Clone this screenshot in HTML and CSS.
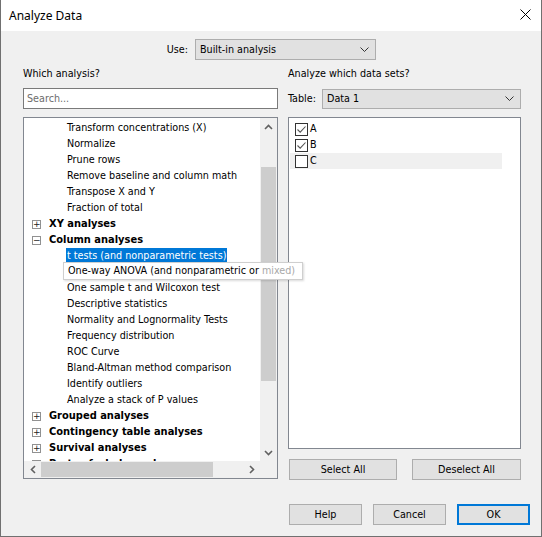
FILE: index.html
```html
<!DOCTYPE html>
<html lang="en">
<head>
    <meta charset="UTF-8">
    <meta name="viewport" content="width=device-width, initial-scale=1.0">
    <title>Analyze Data</title>
    <link rel="stylesheet" href="styles.css">
</head>
<body>
    <div class="window">
        <div class="titlebar">
            <span class="title">Analyze Data</span>
            <svg class="close" width="11" height="11" viewBox="0 0 11 11">
                <path d="M0.5 0.5 L10.5 10.5 M10.5 0.5 L0.5 10.5" stroke="#000" stroke-width="1" fill="none"/>
            </svg>
        </div>

        <div class="dialog-body">
            <div class="use-row">
                <label class="use-label">Use:</label>
                <div class="select use-select">
                    <span>Built-in analysis</span>
                    <svg class="chevron" width="9" height="5" viewBox="0 0 9 5"><path d="M0.5 0.5 L4.5 4.5 L8.5 0.5" stroke="#333" fill="none"/></svg>
                </div>
            </div>

            <div class="columns">
                <div class="col-left">
                    <div class="caption">Which analysis?</div>
                    <div class="search">Search...</div>

                    <div class="tree">
                        <div class="tree-items">
                            <div class="row child"><span>Transform concentrations (X)</span></div>
                            <div class="row child"><span>Normalize</span></div>
                            <div class="row child"><span>Prune rows</span></div>
                            <div class="row child"><span>Remove baseline and column math</span></div>
                            <div class="row child"><span>Transpose X and Y</span></div>
                            <div class="row child"><span>Fraction of total</span></div>
                            <div class="row parent"><i class="expander">+</i><span>XY analyses</span></div>
                            <div class="row parent"><i class="expander">&minus;</i><span>Column analyses</span></div>
                            <div class="row child"><span class="selected">t tests (and nonparametric tests)</span></div>
                            <div class="row child"><span>One-way ANOVA (and nonparametric or mixed)</span></div>
                            <div class="row child"><span>One sample t and Wilcoxon test</span></div>
                            <div class="row child"><span>Descriptive statistics</span></div>
                            <div class="row child"><span>Normality and Lognormality Tests</span></div>
                            <div class="row child"><span>Frequency distribution</span></div>
                            <div class="row child"><span>ROC Curve</span></div>
                            <div class="row child"><span>Bland-Altman method comparison</span></div>
                            <div class="row child"><span>Identify outliers</span></div>
                            <div class="row child"><span>Analyze a stack of P values</span></div>
                            <div class="row parent"><i class="expander">+</i><span>Grouped analyses</span></div>
                            <div class="row parent"><i class="expander">+</i><span>Contingency table analyses</span></div>
                            <div class="row parent"><i class="expander">+</i><span>Survival analyses</span></div>
                            <div class="row parent"><i class="expander">+</i><span>Parts of whole analyses</span></div>
                        </div>

                        <div class="vscroll">
                            <div class="arrow">
                                <svg width="9" height="6" viewBox="0 0 9 6"><path d="M1 5 L4.5 1.5 L8 5" stroke="#606060" stroke-width="1.6" fill="none"/></svg>
                            </div>
                            <div class="vtrack"><div class="vthumb"></div></div>
                            <div class="arrow">
                                <svg width="9" height="6" viewBox="0 0 9 6"><path d="M1 1 L4.5 4.5 L8 1" stroke="#606060" stroke-width="1.6" fill="none"/></svg>
                            </div>
                        </div>

                        <div class="hscroll">
                            <div class="arrow">
                                <svg width="6" height="9" viewBox="0 0 6 9"><path d="M5 1 L1.5 4.5 L5 8" stroke="#606060" stroke-width="1.6" fill="none"/></svg>
                            </div>
                            <div class="htrack"><div class="hthumb"></div></div>
                            <div class="arrow">
                                <svg width="6" height="9" viewBox="0 0 6 9"><path d="M1 1 L4.5 4.5 L1 8" stroke="#606060" stroke-width="1.6" fill="none"/></svg>
                            </div>
                        </div>

                        <div class="corner"></div>
                    </div>
                </div>

                <div class="col-right">
                    <div class="caption">Analyze which data sets?</div>
                    <div class="table-row">
                        <label class="table-label">Table:</label>
                        <div class="select table-select">
                            <span>Data 1</span>
                            <svg class="chevron" width="9" height="5" viewBox="0 0 9 5"><path d="M0.5 0.5 L4.5 4.5 L8.5 0.5" stroke="#333" fill="none"/></svg>
                        </div>
                    </div>

                    <div class="sets">
                        <div class="set-row">
                            <span class="checkbox checked">
                                <svg width="11" height="11" viewBox="0 0 11 11"><path d="M1.5 5.5 L4.2 8.2 L9.5 2.5" stroke="#555" stroke-width="1.1" fill="none"/></svg>
                            </span>
                            <span>A</span>
                        </div>
                        <div class="set-row">
                            <span class="checkbox checked">
                                <svg width="11" height="11" viewBox="0 0 11 11"><path d="M1.5 5.5 L4.2 8.2 L9.5 2.5" stroke="#555" stroke-width="1.1" fill="none"/></svg>
                            </span>
                            <span>B</span>
                        </div>
                        <div class="set-row hover">
                            <span class="checkbox"></span>
                            <span>C</span>
                        </div>
                    </div>

                    <div class="set-buttons">
                        <button class="button select-all">Select All</button>
                        <button class="button deselect-all">Deselect All</button>
                    </div>
                </div>
            </div>

            <div class="footer">
                <button class="button">Help</button>
                <button class="button">Cancel</button>
                <button class="button default">OK</button>
            </div>
        </div>

        <!-- in-place tip for the truncated tree item -->
        <div class="tooltip">One-way ANOVA (and nonparametric or <span class="fade">mixed)</span></div>
    </div>
</body>
</html>
```

FILE: styles.css
```css
body {
    margin: 0;
    background-color: #ffffff;
    font-family: "DejaVu Sans Condensed", "DejaVu Sans", sans-serif;
    font-size: 10.7px;
    color: #000;
}

.window {
    position: relative;
    width: 542px;
    height: 537px;
    box-sizing: border-box;
    border: 1px solid #707070;
    border-top: none;
    background-color: #f0f0f0;
}

.titlebar {
    height: 31px;
    background-color: #ffffff;
    display: flex;
    align-items: center;
    justify-content: space-between;
    padding: 0 10px 0 8px;
}

.title {
    font-family: "Noto Sans", sans-serif;
    font-size: 12px;
    margin-top: -1px;
}

.close {
    margin-top: -2px;
}

.dialog-body {
    padding: 8px 0 0 22px;
}

/* Use: row */

.use-row {
    display: flex;
    align-items: center;
    height: 21px;
    padding-left: 127px;
}

.use-label {
    width: 38px;
    text-align: right;
    margin-right: 7px;
}

.select {
    box-sizing: border-box;
    height: 21px;
    border: 1px solid #adadad;
    background-color: #e1e1e1;
    display: flex;
    align-items: center;
    justify-content: space-between;
    padding: 0 6px 0 4px;
}

.use-select {
    width: 181px;
}

.table-select {
    width: 199px;
    height: 20px;
}

/* two columns */

.columns {
    display: flex;
    gap: 10px;
    margin-top: 6px;
}

.col-left {
    width: 255px;
    display: flex;
    flex-direction: column;
}

.col-right {
    width: 233px;
    display: flex;
    flex-direction: column;
}

.caption {
    height: 16px;
    line-height: 16px;
}

.search {
    box-sizing: border-box;
    height: 21px;
    margin-top: 6px;
    border: 1px solid #7a7a7a;
    background-color: #fff;
    color: #6d6d6d;
    padding: 0 3px;
    line-height: 19px;
}

.tree {
    box-sizing: border-box;
    height: 362px;
    margin-top: 8px;
    border: 1px solid #828790;
    background-color: #fff;
    display: grid;
    grid-template-columns: 1fr 17px;
    grid-template-rows: 1fr 17px;
    overflow: hidden;
}

.tree-items {
    overflow: hidden;
    padding-top: 2px;
}

.row {
    height: 16px;
    line-height: 16px;
    white-space: nowrap;
    display: flex;
    align-items: center;
}

.row.child {
    padding-left: 42px;
}

.row.child span {
    padding: 0 1px;
    line-height: 16px;
}

.row .selected {
    background-color: #0078d7;
    color: #fff;
}

.row.parent {
    padding-left: 8px;
    font-weight: bold;
    font-size: 11px;
}

.expander {
    box-sizing: border-box;
    width: 9px;
    height: 9px;
    border: 1px solid #919191;
    margin-right: 8px;
    font-style: normal;
    font-weight: normal;
    font-family: "DejaVu Sans", sans-serif;
    font-size: 9px;
    line-height: 6px;
    text-align: center;
    color: #222;
}

/* scrollbars */

.vscroll {
    background-color: #f0f0f0;
    display: flex;
    flex-direction: column;
}

.vscroll .arrow {
    height: 17px;
    display: flex;
    align-items: center;
    justify-content: center;
}

.vtrack {
    flex: 1;
    padding-top: 32px;
}

.vthumb {
    height: 214px;
    margin: 0 1px;
    background-color: #cdcdcd;
}

.hscroll {
    background-color: #f0f0f0;
    display: flex;
}

.hscroll .arrow {
    width: 17px;
    display: flex;
    align-items: center;
    justify-content: center;
}

.htrack {
    flex: 1;
}

.hthumb {
    width: 172px;
    height: 15px;
    margin-top: 1px;
    background-color: #cdcdcd;
}

.corner {
    background-color: #f0f0f0;
}

/* data sets */

.table-row {
    display: flex;
    align-items: center;
    justify-content: space-between;
    margin-top: 6px;
    height: 21px;
}

.sets {
    box-sizing: border-box;
    height: 332px;
    margin-top: 8px;
    border: 1px solid #828790;
    background-color: #fff;
    padding: 3px 18px 0 1px;
}

.set-row {
    height: 16px;
    display: flex;
    align-items: center;
    line-height: 16px;
}

.set-row.hover {
    background-color: #f0f0f0;
}

.checkbox {
    box-sizing: border-box;
    width: 13px;
    height: 13px;
    margin-left: 5px;
    margin-right: 2px;
    border: 1px solid #333;
    background-color: #fff;
    display: flex;
    align-items: center;
    justify-content: center;
}

.set-buttons {
    display: flex;
    justify-content: space-between;
    margin-top: 10px;
    padding-left: 1px;
}

.button {
    box-sizing: border-box;
    height: 21px;
    border: 1px solid #adadad;
    background-color: #e1e1e1;
    font-family: inherit;
    font-size: 10.7px;
    color: #000;
    padding: 0;
}

.select-all {
    width: 108px;
}

.deselect-all {
    width: 109px;
}

.footer {
    display: flex;
    gap: 11px;
    margin-top: 24px;
    padding-left: 266px;
}

.footer .button {
    width: 73px;
}

.button.default {
    border: 2px solid #0078d7;
}

.tooltip {
    position: absolute;
    left: 62px;
    top: 262px;
    width: 240px;
    height: 18px;
    box-sizing: border-box;
    border: 1px solid #cfcfcf;
    background-color: #fff;
    box-shadow: 1px 1px 2px rgba(0, 0, 0, 0.15);
    padding-left: 4px;
    line-height: 16px;
    white-space: nowrap;
}

.tooltip .fade {
    color: #a8a8a8;
}
```
